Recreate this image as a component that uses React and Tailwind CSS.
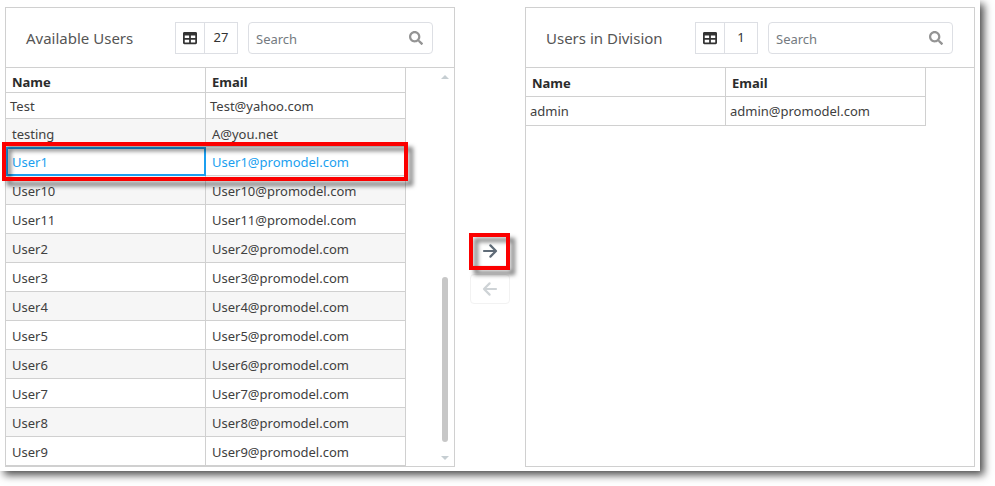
import { FaSearch, FaTable } from "react-icons/fa";

const available = [
  { name: "Test", email: "Test@yahoo.com", kind: "first" },
  { name: "testing", email: "A@you.net" },
  { name: "User1", email: "User1@promodel.com", kind: "selected" },
  ...["10", "11", "2", "3", "4", "5", "6", "7", "8", "9"].map((n) => ({
    name: `User${n}`,
    email: `User${n}@promodel.com`,
  })),
];

const division = [{ name: "admin", email: "admin@promodel.com", kind: "single" }];

const rowStyles = {
  first: "h-[26px]",
  single: "h-[29px]",
  selected: "h-[29px] text-[#1b9ff0]",
};

function Arrow({ left }) {
  return (
    <svg
      width="16"
      height="16"
      viewBox="0 0 16 16"
      fill="none"
      stroke="currentColor"
      strokeWidth="2.2"
      strokeLinecap="round"
      strokeLinejoin="round"
    >
      <path d={left ? "M14 8H2.4M7.6 2.4 2 8l5.6 5.6" : "M2 8h11.6M8.4 2.4 14 8l-5.6 5.6"} />
    </svg>
  );
}

function Highlight({ className }) {
  return (
    <span
      aria-hidden="true"
      className={`pointer-events-none absolute z-10 border-4 border-[#fb0000] drop-shadow-[5px_5px_2px_rgba(0,0,0,0.5)] ${className}`}
    />
  );
}

function Row({ user, index }) {
  const plain = user.kind === "first" || user.kind === "single";
  const pad = plain ? "pl-1" : "pt-0.5 pl-1.5";
  const height = rowStyles[user.kind] ?? (index === 1 ? "h-7" : "h-[29px]");
  const selected = user.kind === "selected";
  return (
    <tr className={`relative ${height} ${index % 2 ? "bg-[#f6f6f6]" : "bg-white"}`}>
      <td
        className={`${pad} ${
          selected
            ? "border-r border-b border-[#1b9ff0] shadow-[inset_1px_1px_0_#1b9ff0,inset_2px_2px_0_#1b9ff0,inset_-1px_-1px_0_#1b9ff0]"
            : "border-r border-b border-[#d0d0d0]"
        }`}
      >
        {user.name}
        {selected && <Highlight className="-inset-y-[5px] -left-1 -right-0.5" />}
      </td>
      <td className={`border-r border-b border-[#d0d0d0] ${pad}`}>{user.email}</td>
    </tr>
  );
}

function Panel({ title, count, users, headHeight, headCell, scroll }) {
  const th = `border-r border-b border-[#d0d0d0] pl-1.5 font-bold ${headCell}`;
  return (
    <section className="flex min-w-0 flex-1 flex-col border border-[#d0d0d0] bg-white">
      <header className="flex h-[60px] items-center border-b border-[#d0d0d0] pr-[21px] pl-5">
        <h2 className="mt-0.5 flex-1 text-[15px] whitespace-nowrap text-[#555]">{title}</h2>
        <div className="flex h-8 w-[63px] border border-[#dddfe4] text-[#333]">
          <span className="flex w-[29px] items-center justify-center border-r border-[#dddfe4]">
            <FaTable size={14} />
          </span>
          <span className="flex flex-1 items-center justify-center">{count}</span>
        </div>
        <div className="relative ml-2.5 w-[185px]">
          <input
            type="text"
            aria-label={`Search ${title}`}
            placeholder="Search"
            className="block h-8 w-full rounded border border-[#dddfe4] pt-0.5 pr-8 pl-[7px] text-[#333] outline-none placeholder:text-[#747a80]"
          />
          <FaSearch size={14} className="absolute top-[9px] right-2.5 text-[#949494]" />
        </div>
      </header>
      <div className="flex flex-1">
        <div className="flex-1">
          <table className="w-full table-fixed border-separate border-spacing-0 leading-5">
            <thead>
              <tr className={`text-left text-[#2b2b2b] ${headHeight}`}>
                <th className={th}>Name</th>
                <th className={th}>Email</th>
              </tr>
            </thead>
            <tbody>
              {users.map((user, i) => (
                <Row key={user.name} user={user} index={i} />
              ))}
            </tbody>
          </table>
        </div>
        <div className="flex w-12 flex-col items-end pt-[7px] pr-[5px] pb-[6px]">
          {scroll && (
            <>
              <svg width="8" height="4" viewBox="0 0 8 4" className="fill-[#c6ced2]">
                <path d="M4 0 8 4H0z" />
              </svg>
              <div className="mr-px flex flex-1 items-end pb-3.5">
                <div className="h-[165px] w-1.5 rounded-full bg-[#c7c7c7]" />
              </div>
              <svg width="8" height="4" viewBox="0 0 8 4" className="fill-[#c6ced2]">
                <path d="M0 0H8L4 4z" />
              </svg>
            </>
          )}
        </div>
      </div>
    </section>
  );
}

export default function App() {
  return (
    <div className="bg-white pr-[15px] pb-[15px] font-['Noto_Sans',sans-serif] text-[13px] text-[#404040]">
      <main className="flex bg-white px-[5px] pt-[7px] pb-1 shadow-[4px_4px_8px_rgba(0,0,0,0.7)]">
        <Panel
          title="Available Users"
          count={27}
          users={available}
          headHeight="h-[25px]"
          headCell="pt-1"
          scroll
        />
        <div className="flex w-[70px] flex-col items-center justify-center gap-2 pt-[66px]">
          <div className="relative">
            <button
              type="button"
              aria-label="Add to division"
              className="flex h-[30px] w-10 items-center justify-center rounded border border-[#f2f2f2] bg-white text-[#5f6b77]"
            >
              <Arrow />
            </button>
            <Highlight className="-top-[3px] right-0 -bottom-1 -left-px" />
          </div>
          <button
            type="button"
            disabled
            aria-label="Remove from division"
            className="flex h-[30px] w-10 items-center justify-center rounded border border-[#f2f2f2] bg-white text-[#ced3d6]"
          >
            <Arrow left />
          </button>
        </div>
        <Panel
          title="Users in Division"
          count={1}
          users={division}
          headHeight="h-[29px]"
          headCell="pt-0.5"
        />
      </main>
    </div>
  );
}
